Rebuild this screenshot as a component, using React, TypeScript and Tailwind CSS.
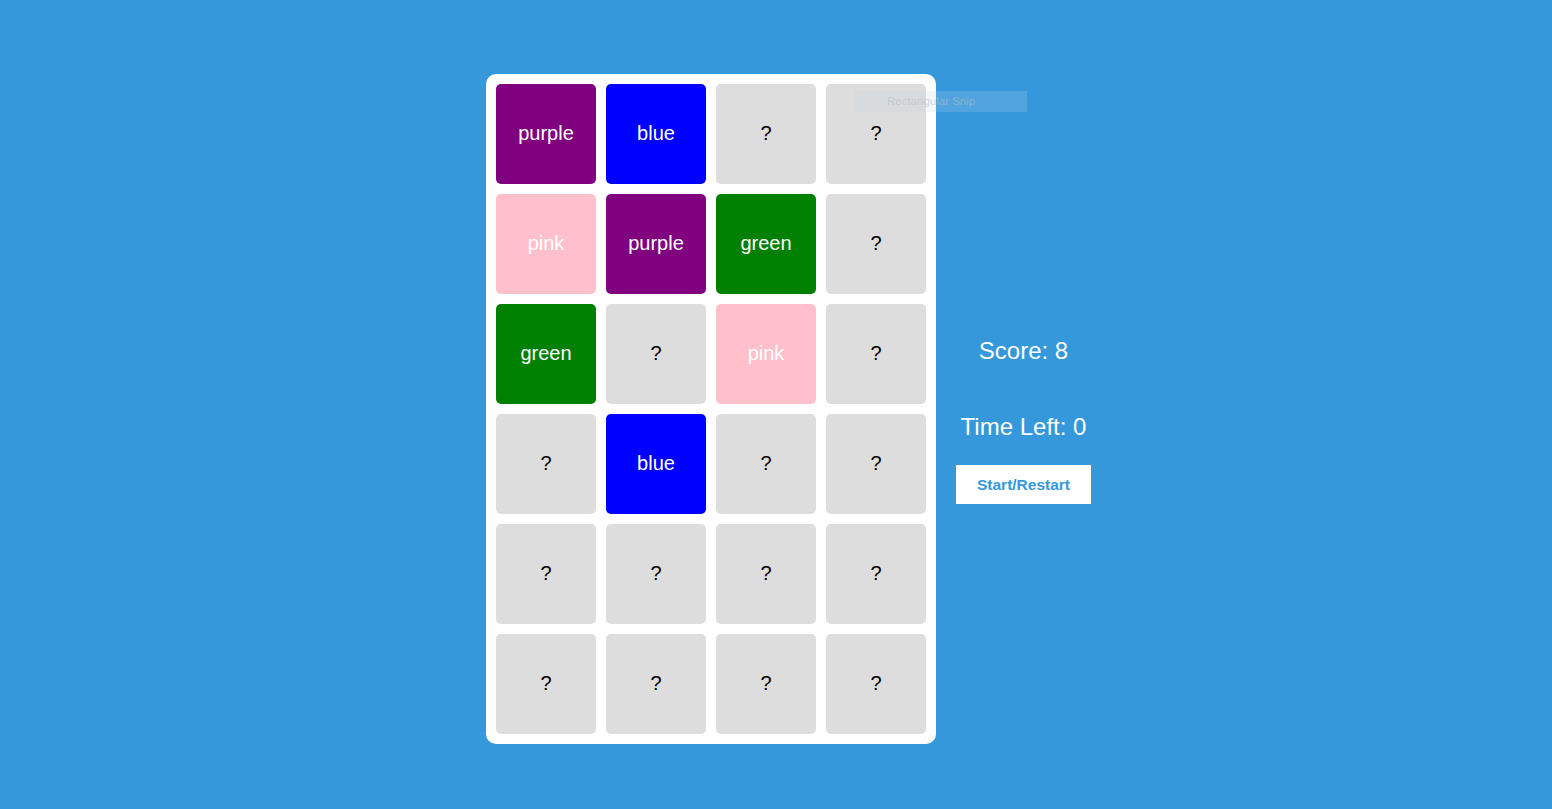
const cards: (string | null)[] = [
  "purple", "blue", null, null,
  "pink", "purple", "green", null,
  "green", null, "pink", null,
  null, "blue", null, null,
  null, null, null, null,
  null, null, null, null,
];

const colorClass: Record<string, string> = {
  purple: "bg-[#800080] text-white",
  blue: "bg-[#0000ff] text-white",
  pink: "bg-[#ffc0cb] text-white",
  green: "bg-[#008000] text-white",
};

const Card = ({ color }: { color: string | null }) => {
  return (
    <div
      className={`w-[100px] h-[100px] rounded-[5px] flex items-center justify-center pb-[2px] text-[20px] ${
        color ? colorClass[color] : "bg-[#dddddd] text-black"
      }`}
    >
      {color ?? "?"}
    </div>
  );
};

const App = () => {
  return (
    <div
      className="relative w-full min-h-[809px] bg-[#3498db] flex justify-center pt-[74px] pl-[25px]"
      style={{ fontFamily: '"Liberation Sans", Arial, sans-serif' }}
    >
      <div className="flex items-start gap-[20px]">
        <div className="bg-white rounded-[10px] p-[10px] grid grid-cols-4 gap-[10px]">
          {cards.map((c, i) => (
            <Card key={i} color={c} />
          ))}
        </div>
        <div className="w-[135px] flex flex-col items-center pt-[263px] text-white">
          <div className="text-[24px] leading-[28px] whitespace-nowrap">Score: 8</div>
          <div className="text-[24px] leading-[28px] whitespace-nowrap mt-[48px]">Time Left: 0</div>
          <button className="mt-[24px] w-[135px] h-[39px] bg-white text-[#3498db] font-bold text-[15.5px]">
            Start/Restart
          </button>
        </div>
      </div>

      {/* leftover snipping tool overlay */}
      <div className="absolute left-[855px] top-[91px] w-[172px] h-[21px] bg-[#c8d6e4]/20 flex items-center pl-[32px] text-[11.5px] text-[#b4bcc4]/60 pointer-events-none">
        Rectangular Snip
      </div>
    </div>
  );
};

export default App;
